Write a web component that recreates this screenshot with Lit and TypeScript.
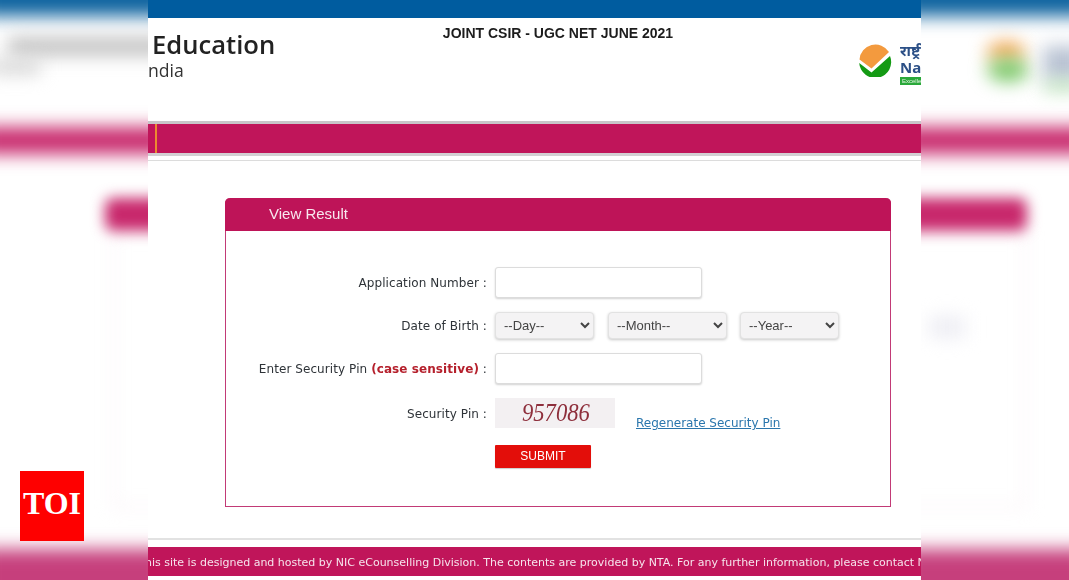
import { LitElement, html, css } from "lit";
import { customElement } from "lit/decorators.js";

@customElement("side-panel")
class SidePanel extends LitElement {
  static styles = css`
    :host {
      display: block;
      position: relative;
      width: 148px;
      height: 580px;
      overflow: hidden;
      background: #fff;
    }
    .smear {
      position: absolute;
      filter: blur(9px);
    }
    .blue { left: -20px; right: -20px; top: -20px; height: 36px; background: #0e639f; }
    .band { left: -20px; right: -20px; top: 127px; height: 27px; background: #c8286c; }
    .foot { left: -20px; right: -20px; top: 549px; height: 60px; background: #c63f7c; }
    .card-l { left: 105px; width: 80px; top: 198px; height: 33px; background: #c8286c; border-radius: 8px; filter: blur(7px); }
    .card-r { left: -40px; width: 146px; top: 198px; height: 33px; background: #c8286c; border-radius: 8px; filter: blur(7px); }
    .frame-l { left: 112px; width: 80px; top: 232px; height: 272px; border: 2px solid #f6e6ee; }
    .frame-r { left: -40px; width: 142px; top: 232px; height: 272px; border: 2px solid #f6e6ee; }
    .grey-a { left: 8px; right: -20px; top: 38px; height: 17px; background: #bdbdbd; }
    .grey-b { left: -10px; width: 50px; top: 60px; height: 14px; background: #d4d4d4; }
    .orange { left: 66px; width: 38px; top: 42px; height: 20px; background: #f2a44c; border-radius: 50%; }
    .green { left: 66px; width: 42px; top: 58px; height: 24px; background: #7cc96b; border-radius: 50%; }
    .navy { left: 122px; width: 40px; top: 46px; height: 34px; background: #b9c3d3; }
    .lime { left: 122px; width: 40px; top: 82px; height: 8px; background: #a6dca0; }
    .ghost { left: 8px; width: 36px; top: 316px; height: 22px; background: #eeeef4; }
    .toi {
      position: absolute;
      left: 20px;
      top: 471px;
      width: 64px;
      height: 70px;
      background: #fe0000;
      color: #fff;
      font: bold 32px/64px "Liberation Serif", serif;
      text-align: center;
    }
  `;

  static properties = { side: { type: String } };
  declare side: string;

  render() {
    const left = this.side === "left";
    return html`
      <div class="smear blue"></div>
      <div class="smear band"></div>
      <div class="smear foot"></div>
      <div class="smear ${left ? "frame-l" : "frame-r"}"></div>
      <div class="smear ${left ? "card-l" : "card-r"}"></div>
      ${left
        ? html`
            <div class="smear grey-a"></div>
            <div class="smear grey-b"></div>
            <div class="toi">TOI</div>
          `
        : html`
            <div class="smear orange"></div>
            <div class="smear green"></div>
            <div class="smear navy"></div>
            <div class="smear lime"></div>
            <div class="smear ghost"></div>
          `}
    `;
  }
}

@customElement("app-root")
class AppRoot extends LitElement {
  static styles = css`
    :host {
      display: flex;
      width: 1069px;
      height: 580px;
      overflow: hidden;
      background: #fff;
      font-family: "DejaVu Sans", sans-serif;
    }
    .page {
      width: 773px;
      height: 580px;
      flex: none;
      overflow: hidden;
      display: flex;
      flex-direction: column;
      background: #fff;
      filter: blur(0.25px);
    }
    .topbar {
      height: 18px;
      flex: none;
      background: #005c9f;
    }
    .header {
      height: 103px;
      flex: none;
      display: grid;
      grid-template-columns: 1fr auto 1fr;
      overflow: hidden;
    }
    .ministry {
      padding: 11px 0 0 4px;
      color: #222;
      font-family: "Open Sans", sans-serif;
      white-space: nowrap;
    }
    .ministry b {
      display: block;
      font-size: 25.6px;
      font-weight: 600;
      line-height: 32px;
    }
    .ministry span {
      display: block;
      margin-left: -4px;
      font-size: 17.6px;
      line-height: 19px;
      color: #333;
    }
    .exam {
      padding: 7px 0 0 47px;
      font: bold 14px/16px "Liberation Sans", sans-serif;
      color: #1c1c1c;
    }
    .nta {
      justify-self: end;
      display: flex;
      gap: 8px;
      padding-top: 25px;
      width: 63px;
      overflow: hidden;
      box-sizing: border-box;
    }
    .nta svg { flex: none; width: 34px; height: 34px; }
    .nta-text {
      font: bold 15px/17px "Noto Sans", "Liberation Sans", sans-serif;
      color: #2b4f86;
      white-space: nowrap;
    }
    .nta-hi { font-size: 15px; line-height: 17px; margin-top: -1px; }
    .pill {
      display: block;
      width: 40px;
      height: 8px;
      margin-top: 1px;
      padding-left: 2px;
      background: #2aa83a;
      color: #e6f5e6;
      font: 6px/8px "Liberation Sans", sans-serif;
    }
    .nav {
      height: 29px;
      flex: none;
      border-top: 3px solid #c9c5c9;
      border-bottom: 3px solid #d3d0d3;
      background: #c0155a;
      padding-left: 7px;
    }
    .nav i {
      display: block;
      width: 2px;
      height: 100%;
      background: #ec8a30;
    }
    .rule {
      height: 1px;
      flex: none;
      margin-top: 4px;
      background: #dcdcdc;
    }
    .main {
      flex: 1;
      padding: 37px 30px 0 77px;
    }
    .card {
      height: 309px;
      box-sizing: border-box;
      border: 1px solid #c23a76;
      border-top: none;
      border-radius: 5px 5px 0 0;
    }
    .card-head {
      height: 33px;
      margin: 0 -1px;
      padding-left: 44px;
      background: #be1458;
      border-radius: 5px 5px 0 0;
      color: #f8e8ef;
      font: 15px/31px "Liberation Sans", sans-serif;
    }
    .form {
      display: grid;
      grid-template-columns: 261px 1fr;
      column-gap: 8px;
      padding-top: 36px;
      color: #2e3338;
      font-size: 12px;
    }
    .lbl {
      text-align: right;
      white-space: nowrap;
      letter-spacing: 0.08px;
    }
    .lbl em {
      font-style: normal;
      font-weight: bold;
      color: #b5202c;
    }
    .r1 { height: 44px; padding-top: 9px; box-sizing: border-box; }
    .r2 { height: 42px; padding-top: 8px; box-sizing: border-box; }
    .r3 { height: 45px; padding-top: 9px; box-sizing: border-box; }
    .r4 { height: 47px; padding-top: 9px; box-sizing: border-box; }
    input {
      display: block;
      width: 207px;
      height: 31px;
      box-sizing: border-box;
      border: 1px solid #dcdcdc;
      border-radius: 3px;
      background: #fff;
      box-shadow: 0 1px 2px rgba(0, 0, 0, 0.18);
      outline: none;
    }
    .dob {
      display: flex;
      height: 42px;
      align-items: flex-start;
      padding-top: 1px;
      box-sizing: border-box;
    }
    select {
      height: 27px;
      box-sizing: border-box;
      border: 1px solid #e2e2e2;
      border-radius: 4px;
      background-color: #f4f3f4;
      box-shadow: 0 1px 3px rgba(0, 0, 0, 0.22);
      color: #444;
      font: 13px "Liberation Sans", sans-serif;
      padding-left: 4px;
      outline: none;
    }
    .day { width: 99px; margin-right: 14px; }
    .month { width: 119px; margin-right: 13px; }
    .year { width: 99px; }
    .pin-row {
      display: flex;
      align-items: flex-start;
      height: 47px;
    }
    .captcha {
      width: 120px;
      height: 30px;
      background: #f3f0f2;
      color: #8e2f3c;
      font: italic 26px/30px "Liberation Serif", serif;
      padding-left: 27px;
      box-sizing: border-box;
      overflow: hidden;
    }
    .captcha span {
      display: inline-block;
      transform: scaleX(0.87);
      transform-origin: left center;
    }
    a {
      margin: 18px 0 0 21px;
      color: #2a76ad;
      text-decoration: underline;
      white-space: nowrap;
    }
    button {
      display: block;
      width: 96px;
      height: 23px;
      border: none;
      border-radius: 1px;
      background: #e30e0a;
      color: #fff;
      font: 12px "Liberation Sans", sans-serif;
      padding: 0 0 2px;
      box-shadow: 0 1px 1px rgba(0, 0, 0, 0.2);
    }
    .foot-rule {
      height: 2px;
      flex: none;
      background: #e2e2e2;
    }
    .footer {
      height: 29px;
      flex: none;
      margin: 7px 0 4px;
      background: #c0155a;
      color: #f6e4ec;
      font-size: 11px;
      line-height: 31px;
      white-space: nowrap;
      overflow: hidden;
      text-indent: -3px;
    }
  `;

  render() {
    return html`
      <side-panel side="left"></side-panel>
      <div class="page">
        <div class="topbar"></div>
        <div class="header">
          <div class="ministry"><b>Education</b><span>ndia</span></div>
          <div class="exam">JOINT CSIR - UGC NET JUNE 2021</div>
          <div class="nta">
            <svg viewBox="0 0 34 34">
              <path d="M1.5 16.5A16 16 0 0 1 31 9L13.5 25.5Z" fill="#f39a3e" />
              <path d="M1.2 20 13.5 29.5 32 13A16 16 0 1 1 1.2 20Z" fill="#149a14" />
            </svg>
            <div class="nta-text">
              <div class="nta-hi">राष्ट्रीय</div>
              <div>National</div>
              <span class="pill">Excellence</span>
            </div>
          </div>
        </div>
        <div class="nav"><i></i></div>
        <div class="rule"></div>
        <div class="main">
          <div class="card">
            <div class="card-head">View Result</div>
            <div class="form">
              <div class="lbl r1">Application Number :</div>
              <div><input type="text" /></div>
              <div class="lbl r2">Date of Birth :</div>
              <div class="dob">
                <select class="day"><option>--Day--</option></select>
                <select class="month"><option>--Month--</option></select>
                <select class="year"><option>--Year--</option></select>
              </div>
              <div class="lbl r3">Enter Security Pin <em>(case sensitive)</em> :</div>
              <div><input type="text" /></div>
              <div class="lbl r4">Security Pin :</div>
              <div class="pin-row">
                <div class="captcha"><span>957086</span></div>
                <a href="#">Regenerate Security Pin</a>
              </div>
              <div></div>
              <div><button>SUBMIT</button></div>
            </div>
          </div>
        </div>
        <div class="foot-rule"></div>
        <div class="footer">his site is designed and hosted by NIC eCounselling Division. The contents are provided by NTA. For any further information, please contact NTA</div>
      </div>
      <side-panel side="right"></side-panel>
    `;
  }
}
